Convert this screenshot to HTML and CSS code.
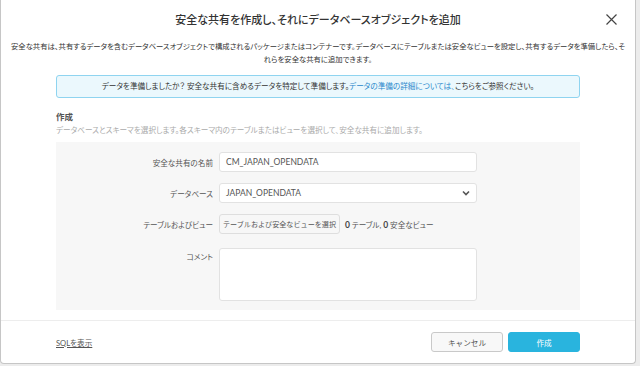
FILE: index.html
```html
<!DOCTYPE html>
<html lang="ja">
<head>
    <meta charset="UTF-8">
    <meta name="viewport" content="width=device-width, initial-scale=1.0">
    <title>安全な共有を作成</title>
    <link rel="stylesheet" href="styles.css">
</head>
<body>
    <div class="dialog">
        <div class="dialog-header">
            <h1 class="dialog-title">安全な共有を作成し、それにデータベースオブジェクトを追加</h1>
            <button class="close-btn" aria-label="閉じる">
                <svg width="11" height="11" viewBox="0 0 11 11"><path d="M0.5 0.5 L10.5 10.5 M10.5 0.5 L0.5 10.5" stroke="#444" stroke-width="1.2" fill="none"/></svg>
            </button>
        </div>
        <p class="intro">安全な共有は、共有するデータを含むデータベースオブジェクトで構成されるパッケージまたはコンテナーです。データベースにテーブルまたは安全なビューを設定し、共有するデータを準備したら、そ<br>れらを安全な共有に追加できます。</p>

        <div class="content">
            <div class="notice">
                データを準備しましたか？ 安全な共有に含めるデータを特定して準備します。<a href="#" class="notice-link">データの準備の詳細については、</a>こちらをご参照ください。
            </div>

            <h2 class="section-title">作成</h2>
            <p class="section-sub">データベースとスキーマを選択します。各スキーマ内のテーブルまたはビューを選択して、安全な共有に追加します。</p>

            <div class="panel">
                <label class="field-label">安全な共有の名前</label>
                <div class="input">CM_JAPAN_OPENDATA</div>

                <label class="field-label">データベース</label>
                <div class="input select">
                    <span>JAPAN_OPENDATA</span>
                    <svg width="8" height="6" viewBox="0 0 8 6"><path d="M1 1.5 L4 4.5 L7 1.5" stroke="#555" stroke-width="1.6" fill="none"/></svg>
                </div>

                <label class="field-label">テーブルおよびビュー</label>
                <div class="pick-row">
                    <button class="pick-btn">テーブルおよび安全なビューを選択</button>
                    <span class="count"><b>0</b> テーブル, <b>0</b> 安全なビュー</span>
                </div>

                <label class="field-label top">コメント</label>
                <div class="textarea"></div>
            </div>
        </div>

        <div class="dialog-footer">
            <a href="#" class="sql-link">SQLを表示</a>
            <div class="actions">
                <button class="btn btn-cancel">キャンセル</button>
                <button class="btn btn-primary">作成</button>
            </div>
        </div>
    </div>
</body>
</html>
```

FILE: styles.css
```css
body {
    margin: 0;
    background-color: #ececec;
    font-family: Lato, "Noto Sans CJK JP", sans-serif;
    font-feature-settings: "palt";
    color: #444;
}
.dialog {
    width: 636px;
    height: 364px;
    background: #ffffff;
    border: 1px solid #c6c6c6;
    border-top: none;
    border-radius: 0 0 4px 4px;
    box-sizing: border-box;
    display: flex;
    flex-direction: column;
}
.dialog-header { position: relative; padding-top: 11px; }
.dialog-title { margin: 0; font-size: 11px; font-weight: 500; color: #333; text-align: center; line-height: 18px; }
.close-btn { position: absolute; right: 18px; top: 13px; border: none; background: none; padding: 0; cursor: pointer; }
.intro { margin: 11px 4px 0; font-size: 7.35px; line-height: 13px; text-align: center; color: #333; }

.content { padding: 9px 55px 0; }
.notice {
    height: 23px;
    line-height: 21px;
    box-sizing: border-box;
    background: #ebf8fd;
    border: 1px solid #8fd4f0;
    border-radius: 3px;
    text-align: center;
    font-size: 7.6px;
    color: #333;
}
.notice-link { color: #2a88cc; text-decoration: none; }
.section-title { margin: 13px 0 0; font-size: 8.5px; font-weight: 700; color: #555; line-height: 12px; }
.section-sub { margin: 1px 0 0; font-size: 7.6px; color: #aaa; line-height: 12px; }

.panel {
    margin-top: 6px;
    background: #f7f7f7;
    height: 168px;
    box-sizing: border-box;
    padding: 10px 0 11px;
    display: grid;
    grid-template-columns: 157px 258px;
    column-gap: 6px;
    row-gap: 11px;
    align-items: center;
    align-content: start;
}
.field-label { text-align: right; font-size: 7.6px; color: #555; }
.field-label.top { align-self: start; padding-top: 6px; }
.input {
    height: 20px;
    box-sizing: border-box;
    background: #fff;
    border: 1px solid #e2e2e2;
    border-radius: 3px;
    padding: 0 6px;
    font-size: 8.5px;
    line-height: 18px;
    color: #555;
}
.select { display: flex; justify-content: space-between; align-items: center; padding-right: 6px; }
.pick-row { display: flex; align-items: center; gap: 5px; }
.pick-btn {
    height: 20px;
    width: 121px;
    padding: 0;
    white-space: nowrap;
    background: #f7f7f7;
    border: 1px solid #dedede;
    border-radius: 3px;
    font-family: inherit;
    font-size: 7.1px;
    color: #555;
}
.count { font-size: 7.6px; color: #555; }
.count b { font-family: Lato, sans-serif; font-size: 8.5px; color: #444; }
.textarea {
    height: 53px;
    margin-top: 3px;
    background: #fff;
    border: 1px solid #e2e2e2;
    border-radius: 3px;
    box-sizing: border-box;
}

.dialog-footer {
    margin-top: auto;
    border-top: 1px solid #ededed;
    height: 43px;
    box-sizing: border-box;
    padding: 0 55px 0;
    display: flex;
    justify-content: space-between;
    align-items: center;
}
.sql-link { font-size: 7.6px; color: #555; text-decoration: underline; }
.actions { display: flex; gap: 5px; }
.btn {
    height: 20px;
    width: 72px;
    border-radius: 3px;
    font-family: inherit;
    font-size: 7.6px;
    cursor: pointer;
}
.btn-cancel { background: #f8f8f8; border: 1px solid #c9c9c9; color: #555; }
.btn-primary { background: #29b4de; border: 1px solid #29b4de; color: #fff; }
```
